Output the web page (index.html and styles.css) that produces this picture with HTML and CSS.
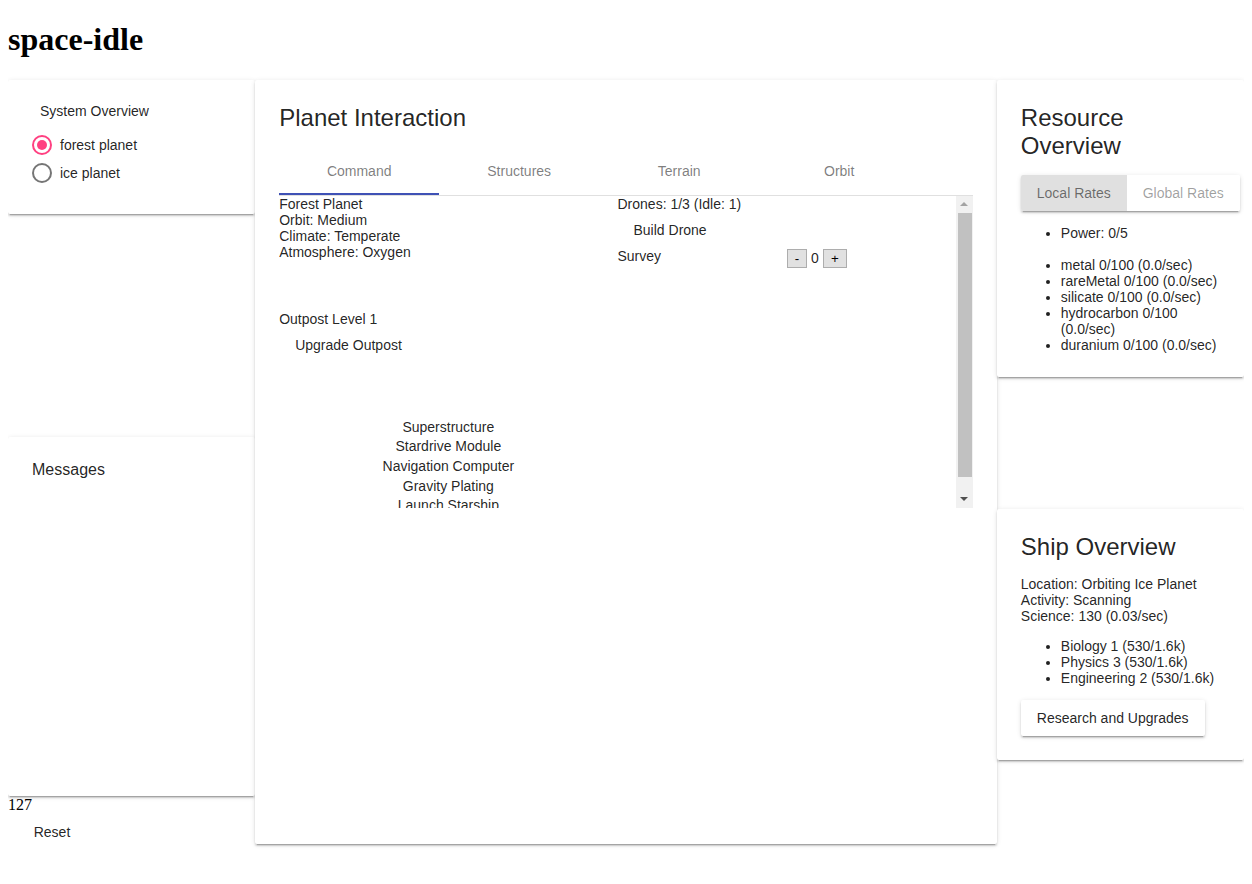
FILE: index.html
```html
<!DOCTYPE html>
<html lang="en">
<head>
<meta charset="utf-8">
<title>space-idle</title>
<link rel="stylesheet" href="styles.css">
</head>
<body>
<h1>space-idle</h1>
<div class="layout">
  <div class="col">
    <section class="card system">
      <div class="sys-title">System Overview</div>
      <div class="radios">
        <label class="radio checked"><span class="circle"></span><span class="radio-label">forest planet</span></label>
        <label class="radio"><span class="circle"></span><span class="radio-label">ice planet</span></label>
      </div>
    </section>
    <section class="card messages">
      <div class="msg-title">Messages</div>
    </section>
    <div class="counter">127</div>
    <button class="flat reset">Reset</button>
  </div>

  <section class="card planet">
    <h2 class="card-title">Planet Interaction</h2>
    <div class="tabs">
      <div class="tab active">Command</div>
      <div class="tab">Structures</div>
      <div class="tab">Terrain</div>
      <div class="tab">Orbit</div>
    </div>
    <div class="tab-body">
      <div class="tab-scroll">
        <div class="pane">
          <div class="half">
            <div class="info">
              <div>Forest Planet</div>
              <div>Orbit: Medium</div>
              <div>Climate: Temperate</div>
              <div>Atmosphere: Oxygen</div>
            </div>
            <div class="outpost">Outpost Level 1</div>
            <button class="flat">Upgrade Outpost</button>
            <div class="parts">
              <div>Superstructure</div>
              <div>Stardrive Module</div>
              <div>Navigation Computer</div>
              <div>Gravity Plating</div>
              <div>Launch Starship</div>
            </div>
          </div>
          <div class="half">
            <div class="line">Drones: 1/3 (Idle: 1)</div>
            <button class="flat">Build Drone</button>
            <div class="survey">
              <div class="survey-label">Survey</div>
              <div class="qty">
                <button class="qty-btn">-</button>
                <span class="qty-val">0</span>
                <button class="qty-btn">+</button>
              </div>
            </div>
          </div>
        </div>
      </div>
      <div class="scrollbar" aria-hidden="true">
        <div class="sb-btn"><span class="arrow-up"></span></div>
        <div class="sb-track"><div class="sb-thumb"></div></div>
        <div class="sb-btn"><span class="arrow-down"></span></div>
      </div>
    </div>
  </section>

  <div class="col">
    <section class="card resource">
      <h2 class="card-title">Resource Overview</h2>
      <div class="toggle-group">
        <button class="toggle selected">Local Rates</button>
        <button class="toggle">Global Rates</button>
      </div>
      <ul class="list power">
        <li>Power: 0/5</li>
      </ul>
      <ul class="list res">
        <li>metal 0/100 (0.0/sec)</li>
        <li>rareMetal 0/100 (0.0/sec)</li>
        <li>silicate 0/100 (0.0/sec)</li>
        <li>hydrocarbon 0/100 (0.0/sec)</li>
        <li>duranium 0/100 (0.0/sec)</li>
      </ul>
    </section>
    <section class="card ship">
      <h2 class="card-title">Ship Overview</h2>
      <div class="ship-info">
        <div>Location: Orbiting Ice Planet</div>
        <div>Activity: Scanning</div>
        <div>Science: 130 (0.03/sec)</div>
      </div>
      <ul class="list sci">
        <li>Biology 1 (530/1.6k)</li>
        <li>Physics 3 (530/1.6k)</li>
        <li>Engineering 2 (530/1.6k)</li>
      </ul>
      <button class="raised">Research and Upgrades</button>
    </section>
  </div>
</div>
</body>
</html>
```

FILE: styles.css
```css
body {
  margin: 8px;
  font-family: "Liberation Serif", "Times New Roman", serif;
  background: #fff;
  color: #000;
}

h1 {
  font-size: 32px;
  font-weight: bold;
  margin: 13.44px 0 21.44px;
  line-height: 37px;
}

.layout {
  display: grid;
  grid-template-columns: minmax(0, 1fr) minmax(0, 3fr) minmax(0, 1fr);
  align-items: start;
}

.col {
  display: flex;
  flex-direction: column;
  align-items: stretch;
  min-width: 0;
}

.card {
  background: #fff;
  border-radius: 2px;
  box-shadow: 0 3px 1px -2px rgba(0,0,0,.2), 0 2px 2px 0 rgba(0,0,0,.14), 0 1px 5px 0 rgba(0,0,0,.12);
  padding: 24px;
  box-sizing: border-box;
  font-family: "Liberation Sans", Arial, sans-serif;
  font-size: 14px;
  line-height: 16px;
  color: rgba(0,0,0,.87);
}

.card-title {
  font-size: 24px;
  font-weight: 400;
  line-height: 28px;
  margin: 0 0 15px;
}

/* System card */
.system { height: 134px; }
.sys-title { padding-left: 8px; line-height: 15px; }
.radios {
  margin-top: 16px;
  display: flex;
  flex-direction: column;
  gap: 8px;
}
.radio {
  display: flex;
  align-items: center;
  height: 20px;
  cursor: pointer;
}
.circle {
  width: 20px;
  height: 20px;
  box-sizing: border-box;
  border: 2px solid rgba(0,0,0,.54);
  border-radius: 50%;
  display: flex;
  align-items: center;
  justify-content: center;
}
.radio.checked .circle { border-color: #ff4081; }
.radio.checked .circle::after {
  content: "";
  width: 10px;
  height: 10px;
  border-radius: 50%;
  background: #ff4081;
}
.radio-label { margin-left: 8px; }

/* Messages */
.messages {
  margin-top: 223px;
  height: 359px;
}
.msg-title {
  font-size: 16px;
  line-height: 18px;
}

.counter {
  font-size: 16px;
  line-height: 18px;
}

/* Buttons */
.flat {
  font-family: "Liberation Sans", Arial, sans-serif;
  font-size: 14px;
  font-weight: 500;
  height: 36px;
  line-height: 36px;
  padding: 0 16px;
  min-width: 88px;
  border: none;
  background: transparent;
  color: rgba(0,0,0,.87);
  text-align: center;
  border-radius: 2px;
  display: block;
  cursor: pointer;
}
.reset { align-self: flex-start; }

.raised {
  font-family: "Liberation Sans", Arial, sans-serif;
  font-size: 14px;
  height: 36px;
  line-height: 36px;
  padding: 0 16px;
  min-width: 88px;
  border: none;
  background: #fff;
  color: rgba(0,0,0,.87);
  border-radius: 2px;
  box-shadow: 0 3px 1px -2px rgba(0,0,0,.2), 0 2px 2px 0 rgba(0,0,0,.14), 0 1px 5px 0 rgba(0,0,0,.12);
  display: block;
}

/* Planet card */
.planet { height: 764px; min-width: 0; }

.tabs {
  display: flex;
  border-bottom: 1px solid rgba(0,0,0,.12);
}
.tab {
  flex: 0 0 160px;
  height: 48px;
  line-height: 48px;
  text-align: center;
  color: rgba(0,0,0,.52);
  position: relative;
}
.tab.active::after {
  content: "";
  position: absolute;
  left: 0;
  right: 0;
  bottom: 0;
  height: 2px;
  background: #3f51b5;
}

.tab-body {
  height: 312px;
  display: flex;
}
.tab-scroll {
  flex: 1 1 auto;
  min-width: 0;
  overflow: hidden;
}

.scrollbar {
  flex: 0 0 17px;
  background: #f1f1f1;
  display: flex;
  flex-direction: column;
}
.sb-btn {
  height: 17px;
  flex: 0 0 17px;
  display: flex;
  align-items: center;
  justify-content: center;
}
.arrow-up {
  width: 0;
  height: 0;
  border-left: 4px solid transparent;
  border-right: 4px solid transparent;
  border-bottom: 4px solid #a3a3a3;
}
.arrow-down {
  width: 0;
  height: 0;
  border-left: 4px solid transparent;
  border-right: 4px solid transparent;
  border-top: 4px solid #505050;
}
.sb-track {
  flex: 1 1 auto;
  padding: 0 1px 0 2px;
}
.sb-thumb {
  height: 264px;
  background: #c1c1c1;
}

.pane { display: flex; }
.half { flex: 1 1 0; min-width: 0; }

.outpost { margin-top: 51px; }
.parts {
  margin-top: 55px;
  margin-bottom: 12px;
  text-align: center;
  line-height: 19.6px;
}

.survey { display: flex; }
.survey-label { flex: 0 0 50%; }
.qty {
  display: flex;
  align-items: center;
  gap: 4px;
  margin-top: 1px;
}
.qty-btn {
  font-family: "Liberation Sans", Arial, sans-serif;
  font-size: 13.33px;
  height: 19px;
  padding: 0 7px;
  border: 1px solid #adadad;
  background: #e1e1e1;
  color: #000;
  border-radius: 0;
  line-height: 15px;
}
.qty-val { font-size: 14px; }

/* Resource card */
.toggle-group {
  display: inline-flex;
  white-space: nowrap;
  border-radius: 2px;
  overflow: hidden;
  box-shadow: 0 3px 1px -2px rgba(0,0,0,.2), 0 2px 2px 0 rgba(0,0,0,.14), 0 1px 5px 0 rgba(0,0,0,.12);
}
.toggle {
  font-family: "Liberation Sans", Arial, sans-serif;
  font-size: 14px;
  height: 36px;
  line-height: 36px;
  padding: 0 16px;
  border: none;
  background: #fff;
  color: rgba(0,0,0,.38);
}
.toggle.selected {
  background: #e0e0e0;
  color: rgba(0,0,0,.54);
}

.list {
  padding-left: 40px;
  margin: 14px 0;
}
.list.power { margin: 14px 0 0; }
.list.res { margin: 16px 0 0; }

/* Ship card */
.ship { margin-top: 132px; }
.ship-info { margin-top: 2px; }
.list.sci { margin: 14px 0; }
```
